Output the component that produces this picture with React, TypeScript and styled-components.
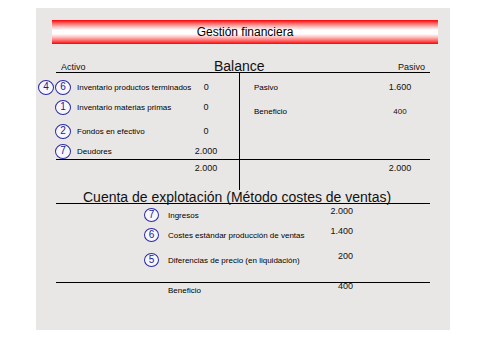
import React from "react";
import styled, { createGlobalStyle } from "styled-components";

const GlobalStyle = createGlobalStyle`
  html, body {
    margin: 0;
    padding: 0;
    background: #ffffff;
  }
  body {
    font-family: "Liberation Sans", Arial, sans-serif;
    color: #111111;
  }
`;

const Slide = styled.div`
  box-sizing: border-box;
  width: 414px;
  height: 322px;
  margin: 8px 0 0 36px;
  padding-top: 12px;
  background-color: #e9e7e5;
  display: flex;
  flex-direction: column;
`;

const TitleBar = styled.div`
  height: 24px;
  margin: 0 12px 0 16px;
  background: linear-gradient(
    to bottom,
    #ff0000 0%,
    #ff5a5a 12%,
    #ffbcbc 28%,
    #ffffff 42%,
    #ffffff 58%,
    #ffbcbc 72%,
    #ff5a5a 88%,
    #ff0000 100%
  );
  display: flex;
  align-items: center;
  justify-content: center;
  font-size: 12px;
  color: #000;
`;

const Section = styled.section`
  margin: 0 20px;
`;

const BalanceHead = styled.div`
  margin-top: 12px;
  height: 16px;
  display: grid;
  grid-template-columns: 153px 1fr auto;
  align-items: end;
  border-bottom: 1px solid #000;
  padding: 0 5px;
`;

const SideLabel = styled.span`
  font-size: 9px;
  line-height: 10px;
`;

const BigHeading = styled.span`
  font-size: 14px;
  line-height: 12px;
  white-space: nowrap;
`;

const TBody = styled.div`
  display: grid;
  grid-template-columns: 183px 1fr;
  grid-template-rows: auto 31px;
`;

type CellProps = { $right?: boolean; $total?: boolean };

const Cell = styled.div<CellProps>`
  border-left: ${(p) => (p.$right ? "1px solid #000" : "none")};
  border-top: ${(p) => (p.$total ? "1px solid #000" : "none")};
  padding-top: ${(p) => (p.$total ? "0" : "6px")};
  padding-left: ${(p) => (p.$right ? "14px" : "0")};
  display: flex;
  flex-direction: column;
`;

type RowProps = { $gap?: number; $right?: boolean };

const AccountRow = styled.div<RowProps>`
  height: 16px;
  margin-top: ${(p) => p.$gap ?? 0}px;
  margin-left: ${(p) => (p.$right ? "0" : "-18px")};
  padding-right: ${(p) => (p.$right ? "15px" : "18px")};
  display: flex;
  align-items: center;
`;

const BadgeSlot = styled.div`
  width: 33px;
  margin-right: 6px;
  display: flex;
  justify-content: flex-end;
  gap: 1px;
`;

type BadgeProps = { $small?: boolean };

const Badge = styled.span<BadgeProps>`
  box-sizing: border-box;
  width: ${(p) => (p.$small ? 15 : 16)}px;
  height: ${(p) => (p.$small ? 14 : 15)}px;
  border: 1px solid #2a2aa6;
  border-radius: 50%;
  background: #f7f7fb;
  color: #1a1a9a;
  font-size: 10px;
  line-height: 1;
  display: flex;
  align-items: center;
  justify-content: center;
`;

const Label = styled.span`
  flex: 1;
  font-size: 8px;
  white-space: nowrap;
  color: #000;
`;

type ValueProps = { $small?: boolean };

const Value = styled.span<ValueProps>`
  width: 30px;
  text-align: center;
  font-size: ${(p) => (p.$small ? 8 : 9)}px;
  white-space: nowrap;
`;

const CuentaHead = styled.div`
  height: 13px;
  display: flex;
  align-items: flex-end;
  padding-left: 27px;
  border-bottom: 1px solid #000;
`;

const CuentaBody = styled.div`
  padding: 4px 77px 0 88px;
  height: 74px;
  display: flex;
  flex-direction: column;
`;

type CRowProps = { $gap?: number };

const CuentaRow = styled.div<CRowProps>`
  height: 14px;
  margin-top: ${(p) => p.$gap ?? 0}px;
  display: grid;
  grid-template-columns: 15px 1fr auto;
  column-gap: 9px;
  align-items: center;
`;

const CuentaValue = styled.span`
  align-self: start;
  margin-top: -2px;
  font-size: 9px;
  line-height: 10px;
  text-align: right;
`;

const ResultRow = styled.div`
  border-top: 1px solid #000;
  padding: 0 77px 0 112px;
  height: 14px;
  display: grid;
  grid-template-columns: 1fr auto;
  align-items: center;
`;

type Entry = { badges: string[]; label: string; value: string; gap: number };

const activo: Entry[] = [
  { badges: ["4", "6"], label: "Inventario productos terminados", value: "0", gap: 0 },
  { badges: ["1"], label: "Inventario materias primas", value: "0", gap: 4 },
  { badges: ["2"], label: "Fondos en efectivo", value: "0", gap: 8 },
  { badges: ["7"], label: "Deudores", value: "2.000", gap: 4 },
];

const cuenta: Entry[] = [
  { badges: ["7"], label: "Ingresos", value: "2.000", gap: 0 },
  { badges: ["6"], label: "Costes estándar producción de ventas", value: "1.400", gap: 6 },
  { badges: ["5"], label: "Diferencias de precio (en liquidación)", value: "200", gap: 11 },
];

const App = () => {
  return (
    <>
      <GlobalStyle />
      <Slide>
        <TitleBar>Gestión financiera</TitleBar>

        <Section>
          <BalanceHead>
            <SideLabel>Activo</SideLabel>
            <BigHeading>Balance</BigHeading>
            <SideLabel>Pasivo</SideLabel>
          </BalanceHead>
          <TBody>
            <Cell>
              {activo.map((e) => (
                <AccountRow key={e.label} $gap={e.gap}>
                  <BadgeSlot>
                    {e.badges.map((b) => (
                      <Badge key={b}>{b}</Badge>
                    ))}
                  </BadgeSlot>
                  <Label>{e.label}</Label>
                  <Value>{e.value}</Value>
                </AccountRow>
              ))}
            </Cell>
            <Cell $right>
              <AccountRow $right>
                <Label>Pasivo</Label>
                <Value>1.600</Value>
              </AccountRow>
              <AccountRow $right $gap={8}>
                <Label>Beneficio</Label>
                <Value $small>400</Value>
              </AccountRow>
            </Cell>
            <Cell $total>
              <AccountRow>
                <BadgeSlot />
                <Label />
                <Value>2.000</Value>
              </AccountRow>
            </Cell>
            <Cell $total $right>
              <AccountRow $right>
                <Label />
                <Value>2.000</Value>
              </AccountRow>
            </Cell>
          </TBody>
        </Section>

        <Section>
          <CuentaHead>
            <BigHeading>Cuenta de explotación (Método costes de ventas)</BigHeading>
          </CuentaHead>
          <CuentaBody>
            {cuenta.map((e) => (
              <CuentaRow key={e.label} $gap={e.gap}>
                <Badge $small>{e.badges[0]}</Badge>
                <Label>{e.label}</Label>
                <CuentaValue>{e.value}</CuentaValue>
              </CuentaRow>
            ))}
          </CuentaBody>
          <ResultRow>
            <Label>Beneficio</Label>
            <CuentaValue>400</CuentaValue>
          </ResultRow>
        </Section>
      </Slide>
    </>
  );
};

export default App;
